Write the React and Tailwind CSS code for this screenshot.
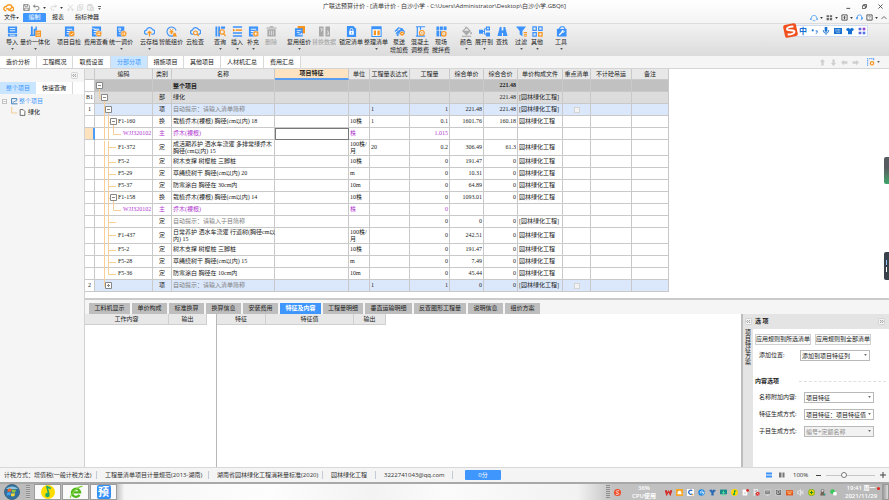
import React from "react";

const B = "#3b92fb";
const O = "#f8941d";
const G = "#a9a9a9";

function Svg({ children, className = "size-[11px]", box = 12 }) {
  return (
    <svg viewBox={`0 0 ${box} ${box}`} className={`${className} shrink-0`} fill="none" aria-hidden="true">
      {children}
    </svg>
  );
}

const Sheet = ({ c = B }) => (
  <>
    <path d="M1 .5h10v11H1z" fill={c} />
    <path d="M3 3.5h6M3 6h6M3 8.5h3" stroke="#fff" strokeWidth="1" />
  </>
);
const Badge = ({ d }) => (
  <>
    <circle cx="8.5" cy="8.5" r="3.3" fill={O} stroke="#eee" strokeWidth=".6" />
    <path d={d} stroke="#fff" strokeWidth=".9" />
  </>
);
const Cloud = () => (
  <path d="M4 9H3a2.3 2.3 0 0 1-.3-4.6A3.5 3.5 0 0 1 9.4 4 2.5 2.5 0 0 1 9 9H8" stroke={B} strokeWidth="1.3" />
);

const ICONS = {
  import: (
    <>
      <path d="M1 .5h10v7H1zM1 8.5h10v3H1z" fill={B} />
      <path d="M3 2.8h6M3 5.2h6M3 10h6" stroke="#fff" strokeWidth=".9" />
    </>
  ),
  quantity: (
    <>
      <path d="M1 .5h2v10H1zM4 3h2v7.5H4zM0 9.5h6v1.5H0zM6 .5h1.5V5H6z" fill={B} />
      <path d="M6 5h6v7H6z" fill={O} />
      <path d="M7 7h4M7 8.8h4M7 10.5h4" stroke="#fff" strokeWidth=".6" />
    </>
  ),
  check: (<><Sheet /><Badge d="M7 8.5l1.2 1.2L10.2 7.5" /></>),
  fee: (
    <>
      <Sheet />
      <path d="M1 2l10 5" stroke="#fff" strokeWidth=".7" />
      <Badge d="M7 7.6h3M7 9.3h3" />
    </>
  ),
  adjust: (
    <>
      <path d="M1 .5h8v11H1z" fill={B} />
      <path d="M3 2.5h2v2H3zM3 6h2M3 8.5h2" stroke="#fff" strokeWidth=".8" />
      <Badge d="M7.5 7v3M9.5 7v3" />
    </>
  ),
  cloudUp: (<><Cloud /><path d="M6 11.5V6M3.9 8L6 5.8 8.1 8" stroke={O} strokeWidth="1.4" /></>),
  smart: (
    <>
      <path d="M10.5 8.5A5 5 0 1 1 11 5M4 11l-1.5-1" stroke={B} strokeWidth="1.2" />
      <path d="M4 3l2 2.5L8 3M6 5.5V9M4 6h4M4 7.5h4" stroke={O} strokeWidth="1" />
      <path d="M8 8.5l2-1.5 2 4.5H7.5z" fill={O} />
    </>
  ),
  cloudFind: (<><Cloud /><circle cx="6" cy="7.5" r="2.1" stroke={O} strokeWidth="1.2" /><path d="M7.5 9l2 2" stroke={O} strokeWidth="1.3" /></>),
  query: (
    <>
      <path d="M.5 .5h2v11h-2zM3.5 .5h2v11h-2zM6.5 .5H11V3H6.5z" fill={B} />
      <circle cx="7.8" cy="6.5" r="2.4" stroke={O} strokeWidth="1.2" />
      <path d="M9.5 8.5l2 2.5" stroke={O} strokeWidth="1.3" />
    </>
  ),
  insert: (
    <>
      <path d="M1 1.2h10M1 10.8h10M1 7.7h10" stroke={B} strokeWidth="1.6" />
      <path d="M4 4.500h7" stroke={O} strokeWidth="1.6" />
      <path d="M1 2.800l2.500 1.700L1 6.200z" fill={O} />
    </>
  ),
  plus: (<><Sheet /><Badge d="M8.5 6.7v3.6M6.7 8.5h3.6" /></>),
  trash: (
    <>
      <path d="M1.5 3.5h9v8h-9zM.5 1.5h11v1.3H.5zM4 .3h4v1H4z" fill={G} />
      <path d="M4 5v5M6 5v5M8 5v5" stroke="#e8e8e8" strokeWidth=".8" />
    </>
  ),
  reuse: (
    <>
      <path d="M4 0h8v8H4z" fill={O} />
      <path d="M1 2.5h8.5v9H1z" fill={B} />
      <path d="M3 5h5M3 7h3M4 9h5l-1.5-1.5M9 9l-1.5 1.5" stroke="#fff" strokeWidth=".8" />
    </>
  ),
  replace: (
    <>
      <path d="M0 .5h5v11H0zM7 .5h5v11H7z" fill={G} />
      <path d="M1.5 3h2l-1 3M8.5 9h2l-1-4" stroke="#eee" strokeWidth=".9" />
    </>
  ),
  lock: (
    <>
      <path d="M1 0h7l3 3v9H1z" fill={B} />
      <path d="M3.5 5.5h5v4h-5z" fill="#fff" />
      <path d="M4.5 5.5V4.2a1.5 1.5 0 0 1 3 0v1.3" stroke="#fff" strokeWidth=".9" />
      <path d="M6 6.7v1.6" stroke={B} strokeWidth=".9" />
    </>
  ),
  arrange: (
    <>
      <path d="M1 1h10v10.5H1z" fill="#fff" stroke={B} strokeWidth="1.2" />
      <path d="M1 1h10v2.5H1z" fill={B} />
      <path d="M3 5h2.5v5H3zM7 5h2.5v5H7z" fill={O} />
    </>
  ),
  pump: (
    <>
      <path d="M1 6l4-4 4 1M5 2L3 5" stroke={B} strokeWidth="1.2" />
      <path d="M4 5.5l5-3 3 3.5v3H2V7.5z" fill={B} />
      <circle cx="4" cy="9.8" r="1.5" fill={B} stroke="#eee" strokeWidth=".5" />
      <circle cx="8.8" cy="8.3" r="2.6" fill={O} stroke="#eee" strokeWidth=".6" />
      <circle cx="8.8" cy="8.3" r=".8" fill="#fff" />
    </>
  ),
  concrete: (
    <>
      <path d="M1 .8h10M2.5 .8v10M1 11h10M6 1v3" stroke={B} strokeWidth="1.3" />
      <circle cx="7.5" cy="7.5" r="2.6" fill="#eee" stroke={O} strokeWidth="1.2" />
      <circle cx="7.5" cy="7.5" r=".8" fill={O} />
    </>
  ),
  site: (
    <>
      <path d="M.5 .5h3v11h-3zM4.3 .5h3.2v4H4.3zM8.3 .5h3.2v4H8.3zM4.3 5.3H6v6.2H4.3z" fill={B} />
      <path d="M.5 4.8h11" stroke="#eee" strokeWidth=".6" />
      <circle cx="8.5" cy="8.5" r="2.5" fill="#eee" stroke={O} strokeWidth="1.3" />
      <circle cx="8.5" cy="8.5" r=".7" fill={O} />
    </>
  ),
  color: (
    <>
      <path d="M2 5.5l4-4 4 4-4 4z" stroke={G} strokeWidth="1.2" />
      <path d="M2.5 5.5h7L6 9zM11 6.5l.7 2h-1.4zM4 .5l2 2" fill={G} stroke={G} strokeWidth=".7" />
      <path d="M1 11.2h10" stroke={G} strokeWidth="1.2" />
    </>
  ),
  expand: (
    <>
      <path d="M0 4h4.5v4.5H0zM7.5 .5H12V5H7.5zM7.5 7H12v4.5H7.5z" fill={B} />
      <path d="M4 6h2M7.5 3H6v6h1.5" stroke={B} />
      <path d="M9 2h1.5v1.5H9z" fill="#fff" />
    </>
  ),
  find: (
    <path d="M3 1h2v2.5L5.5 11H.5L2.5 3.5zM7 1h2l.5 2.5 2 7.5h-5L7 3.5zM5 5h2v2.5H5z" fill={B} />
  ),
  filter: (
    <>
      <path d="M0 .5h11L7 5.5v6L4 9V5.5z" fill={B} />
      <path d="M8.5 7H12M8.5 9H12M8.5 11H12" stroke={O} strokeWidth="1.1" />
    </>
  ),
  other: (
    <>
      <path d="M1 1h3.7v3.7H1zM7.3 1H11v3.7H7.3zM1 7.3h3.7V11H1z" stroke={B} strokeWidth="1.3" />
      <path d="M7.3 7.3H11V11H7.3z" stroke={O} strokeWidth="1.3" />
    </>
  ),
  tools: (
    <>
      <path d="M3 3.500L5.500 .8h3L10 3.500" stroke={B} strokeWidth="1.3" />
      <path d="M1 3.200h10.500v8.300H1z" fill={B} />
      <path d="M3.500 9.800l3.500-3.500" stroke="#fff" strokeWidth="1.3" />
      <circle cx="7.700" cy="5.800" r="1.500" fill="#fff" />
      <circle cx="8.300" cy="5.200" r=".7" fill={B} />
    </>
  ),
};

const RIBBON = [
  ["import", ["导入"], 1, "ml-1 w-4"],
  ["quantity", ["量价一体化"], 1, "w-[30px]"],
  ["check", ["项目自检"], 0, "ml-[7px] w-6"],
  ["fee", ["费用查看"], 0, "ml-[3px] w-6"],
  ["adjust", ["统一调价"], 1, "ml-px w-6"],
  ["cloudUp", ["云存档"], 1, "ml-[7px] w-[18px]"],
  ["smart", ["智能组价"], 0, "ml-px w-6"],
  ["cloudFind", ["云检查"], 0, "ml-[3px] w-[18px]"],
  ["query", ["查询"], 1, "ml-[10px] w-3"],
  ["insert", ["插入"], 1, "ml-[5px] w-3"],
  ["plus", ["补充"], 1, "ml-1 w-3"],
  ["trash", ["删除"], 0, "ml-[6px] w-3 text-[#a0a0a0]"],
  ["reuse", ["复用组价"], 1, "ml-[10px] w-6"],
  ["replace", ["替换数据"], 0, "ml-px w-6 text-[#a0a0a0]"],
  ["lock", ["锁定清单"], 0, "ml-[3px] w-6"],
  ["arrange", ["整理清单"], 1, "ml-px w-6"],
  ["pump", ["泵送", "增加费"], 0, "ml-[2px] w-[18px]"],
  ["concrete", ["混凝土", "调整费"], 0, "ml-[3px] w-[18px]"],
  ["site", ["现场", "搅拌费"], 0, "ml-[3px] w-[18px]"],
  ["color", ["颜色"], 1, "ml-[10px] w-3"],
  ["expand", ["展开到"], 1, "ml-[3px] w-[18px]"],
  ["find", ["查找"], 0, "ml-[3px] w-3"],
  ["filter", ["过滤"], 1, "ml-[7px] w-3"],
  ["other", ["其他"], 1, "ml-1 w-3"],
  ["tools", ["工具"], 1, "ml-3 w-3"],
];

const Caret = ({ className = "text-[#333]" }) => (
  <svg viewBox="0 0 4 3" className={`h-[2px] w-[3px] shrink-0 ${className}`} aria-hidden="true">
    <path d="M0 0h4L2 3z" fill="currentColor" />
  </svg>
);

function TitleBar() {
  return (
    <header className="grid h-3 grid-cols-[1fr_auto_1fr] items-center">
      <div className="flex items-center pt-[2px] pl-[3px]">
        <Svg className="size-[11px]">
          <path d="M3.5 9.5a2.3 2.3 0 1 1 .3-4.5A3.3 3.3 0 0 1 10 5.5a2 2 0 0 1-1 4C7 9.5 6 5.5 3.5 8M6 9.5L9.5 6" stroke="#f9981d" strokeWidth="1.5" />
        </Svg>
        <button aria-label="保存" className="ml-[9px]">
          <Svg className="size-[7px]"><path d="M1 1h8l2 2v8H1zM3 1v3h5V1M3 11V7h6v4" stroke="#555" /></Svg>
        </button>
        <button aria-label="撤销" className="ml-[3px] flex items-center gap-[3px]">
          <Svg className="size-[7px]"><path d="M3 1L1 4l3 2M1 4h6a3 3 0 0 1 0 6.5H5" stroke="#555" strokeWidth="1.2" /></Svg>
          <Caret />
        </button>
        <button aria-label="重做" className="ml-1 flex items-center gap-[3px]">
          <Svg className="size-[7px]"><path d="M9 1l2 3-3 2M11 4H5a3 3 0 0 0 0 6.5h2" stroke="#ccc" strokeWidth="1.2" /></Svg>
          <Caret />
        </button>
        <button aria-label="剪切" className="ml-1">
          <Svg className="size-[7px]"><path d="M2 1l7 8M10 1L3 9" stroke="#ccc" /><circle cx="2.5" cy="10" r="1.3" stroke="#ccc" /><circle cx="9.5" cy="10" r="1.3" stroke="#ccc" /></Svg>
        </button>
        <button aria-label="复制" className="ml-[3px]">
          <Svg className="size-[7px]"><path d="M1 3.5h6v8H1zM4 3.5v-3h6v8H7M3 6h3M3 8.5h3" stroke="#ccc" /></Svg>
        </button>
        <button aria-label="粘贴" className="ml-[3px]">
          <Svg className="size-[7px]"><path d="M1 1.5h8v9H1zM3 .5h4v2H3zM6 5h5v6.5H6z" fill="#f5f5f5" stroke="#ccc" /></Svg>
        </button>
        <button aria-label="更多" className="ml-1 flex flex-col items-center gap-px">
          <span className="h-px w-[3px] bg-[#666]" />
          <Caret className="text-[#666]" />
        </button>
      </div>
      <h1 className="whitespace-nowrap text-[#333]">
        广联达预算计价 - [清单计价 - 白沙小学 - C:\Users\Administrator\Desktop\白沙小学.GBQ6]
      </h1>
      <div className="flex items-center justify-end gap-[11px] pr-[6px]">
        <button aria-label="最小化"><Svg className="size-[5px]"><path d="M1 10.5h9" stroke="#333" strokeWidth="2" /></Svg></button>
        <button aria-label="还原"><Svg className="size-[5px]"><path d="M1 4h7v7H1zM4 4V1h7v7H8" stroke="#333" strokeWidth="1.8" /></Svg></button>
        <button aria-label="关闭"><Svg className="size-[5px]"><path d="M1 1l10 10M11 1L1 11" stroke="#333" strokeWidth="1.8" /></Svg></button>
      </div>
    </header>
  );
}

const HeadsetIcon = () => (
  <Svg className="size-[7px]">
    <path d="M2 8V5.5a4 4 0 0 1 8 0V8M8 11l2-2" stroke={B} strokeWidth="1.3" />
    <path d="M.5 5.5h2.5v3.5H.5zM9 5.5h2.5v3.5H9z" fill={B} />
  </Svg>
);

function MenuRow() {
  return (
    <nav className="flex h-[11px] items-center text-[#222]">
      <button className="ml-1 flex items-center">文件<Caret /></button>
      <button className="ml-1 h-[9px] w-[23px] rounded-t-[1px] bg-[#3f97fd] text-white">编制</button>
      <button className="ml-[6px]">报表</button>
      <button className="ml-[11px]">指标神器</button>
      <div className="ml-auto flex items-center pr-[2px]">
        <button aria-label="用户" className="flex items-center gap-[2px]">
          <Svg className="size-2"><path d="M2 9V6a4 4 0 0 1 8 0v3M.8 6v3M11.2 6v3M4 10h4" stroke="#58a9f8" strokeWidth="1.2" /></Svg>
          <Caret />
        </button>
        <button aria-label="应用" className="ml-[3px] flex items-center gap-[2px]">
          <Svg className="size-[7px]"><path d="M1 2h4v3.5H1zM6.5 2h4v3.5h-4zM1 7h4v3.5H1zM6.5 7h4v3.5h-4z" fill="#666" /></Svg>
          <Caret />
        </button>
        <button aria-label="升级" className="ml-[3px] flex items-center gap-[2px]">
          <Svg className="size-[7px]"><path d="M1.5 1.5h9v9h-9z" stroke="#555" strokeWidth="1.6" /><path d="M6 3l2.5 3H7v3H5V6H3.5z" fill="#555" /></Svg>
          <Caret />
        </button>
        <button aria-label="客服" className="ml-[3px]"><HeadsetIcon /></button>
        <button aria-label="帮助" className="ml-[3px] flex items-center gap-[2px]">
          <Svg className="size-[7px]"><path d="M1.5 1.5h9v9h-9z" stroke="#555" strokeWidth="1.6" /><path d="M4.5 4.5C4.5 2.8 7.5 3 7.5 4.7 7.5 6 6 5.8 6 7M6 8v1" stroke="#555" /></Svg>
          <Caret />
        </button>
        <button aria-label="收起" className="ml-[3px]"><Svg className="size-[6px]"><path d="M1 8l5-5 5 5" stroke="#444" strokeWidth="1.5" /></Svg></button>
      </div>
    </nav>
  );
}

function InputMethodBar() {
  const blue = "#1470d2";
  return (
    <div className="absolute top-px right-[21px] flex h-3 items-center gap-1 border border-[#cfdcf0] bg-white pr-px pl-3">
      <div className="absolute -top-[2px] -left-[3px] flex size-[13px] -rotate-12 items-center justify-center rounded-[2px] bg-[#f0501e]">
        <Svg className="size-[11px]"><path d="M10 2.5C7 1.5 2.5 2 2.5 4S10 5.5 10 8 5 10.5 2 9.5" stroke="#fff" strokeWidth="2" /></Svg>
      </div>
      <span className="w-2 text-[8px] leading-[8px] font-bold text-[#1470d2]">中</span>
      <Svg className="size-[7px]"><circle cx="3" cy="4" r="1.8" fill={blue} /><path d="M8 5h2.5v2.5L8.5 10" stroke={blue} strokeWidth="1.6" /></Svg>
      <Svg className="size-2"><path d="M4 0h4v7H4z" fill={blue} /><path d="M2 4.5V6a4 3 0 0 0 8 0V4.5M6 9v3" stroke={blue} strokeWidth="1.2" /></Svg>
      <Svg className="size-2"><path d="M0 1.5h12v9H0z" fill={blue} /><path d="M2 4h8M2 6h8M3.5 8.5h5" stroke="#fff" strokeWidth=".9" strokeDasharray="1.5 .5" /></Svg>
      <Svg className="size-2"><path d="M3.5 1C4.5 3 7.5 3 8.5 1L12 3l-1.5 3-1.5-.5V11H3V5.5L1.5 6 0 3z" fill={blue} /></Svg>
      <Svg className="size-2"><path d="M1 1h4v4H1zM1 7h4v4H1z" fill="#5a66dd" /><path d="M7 1h4v4H7z" fill="#9548c8" /><path d="M7 7h4v4H7z" fill="#4c78e8" /></Svg>
    </div>
  );
}

function Ribbon() {
  return (
    <div className="relative flex h-[33px] border-y border-[#dcdcdc] bg-linear-to-b from-[#f2f2f2] to-[#dcdcdc] pt-[2px]">
      {RIBBON.map(([icon, lines, caret, pos]) => (
        <button key={icon} className={`flex shrink-0 flex-col items-center whitespace-nowrap ${pos}`}>
          <Svg>{ICONS[icon]}</Svg>
          <span className="mt-[2px] flex flex-col gap-px">
            {lines.map((l) => <span key={l}>{l}</span>)}
          </span>
          {caret ? <Caret className="mt-[2px] text-[#555]" /> : null}
        </button>
      ))}
      <InputMethodBar />
    </div>
  );
}

const MAIN_TABS = [
  ["造价分析", "w-[37px]"], ["工程概况", "w-9"], ["取费设置", "w-[38px]"], ["分部分项", "w-[37px]"],
  ["措施项目", "w-9"], ["其他项目", "w-[37px]"], ["人材机汇总", "w-[43px]"], ["费用汇总", "w-[37px]"],
];

function MainTabs() {
  const arrows = [["上移", 0], ["下移", 180], ["左移", 270], ["右移", 90]];
  return (
    <div className="flex h-[13px] border-b border-[#d5d5d5] bg-[#f5f5f5]">
      {MAIN_TABS.map(([t, w]) => (
        <button
          key={t}
          className={`${w} shrink-0 border-r border-[#d9d9d9] ${t === "分部分项" ? "bg-[#c9e5ff] text-[#3f97fd]" : "bg-white text-[#222]"}`}
        >
          {t}
        </button>
      ))}
      <div className="ml-auto flex items-center gap-1 pr-[9px]">
        {arrows.map(([name, a]) => (
          <button key={a} aria-label={name}>
            <Svg className="size-[7px]"><path d="M6 0l4.5 5H8v6H4V5H1.5z" fill="#cfcfcf" transform={`rotate(${a} 6 6)`} /></Svg>
          </button>
        ))}
        <button aria-label="列设置" className="ml-1 flex items-center gap-[2px]">
          <Svg className="size-2"><path d="M1 0v12M3 1h8M10 1v3" stroke={B} strokeWidth="1.3" strokeDasharray="2 .6" /><circle cx="7.5" cy="8" r="2.5" stroke={O} strokeWidth="1.8" /></Svg>
          <Caret className="text-[#666]" />
        </button>
      </div>
    </div>
  );
}

const Chevrons = ({ right }) => (
  <button aria-label={right ? "展开" : "折叠"} className="size-[7px] shrink-0">
    <svg viewBox="0 0 14 14" className="size-[7px]" fill="none" aria-hidden="true">
      <rect x="1" y="1" width="12" height="12" rx="2" fill="#f6f6f6" stroke="#c8c8c8" strokeWidth="1.5" />
      <path d={right ? "M4 4l2.5 3L4 10M8 4l2.5 3L8 10" : "M6 4L3.5 7 6 10M10 4L7.5 7l2.5 3"} stroke="#666" strokeWidth="1.2" />
    </svg>
  </button>
);

function Sidebar() {
  return (
    <aside className="w-[85px] shrink-0 border-r border-[#d2d2d2] bg-[#f5f5f5]">
      <div className="flex h-[13px] items-center justify-end pr-[6px]"><Chevrons /></div>
      <div className="flex h-3 bg-white">
        <button className="w-9 bg-[#c9e5ff] text-[#3f97fd]">整个项目</button>
        <button className="w-[37px] border-r border-[#d9d9d9] text-[#111]">快速查询</button>
      </div>
      <ul className="pt-[2px] pl-[2px]">
        <li>
          <div className="flex h-[11px] items-center">
            <Svg className="size-[5px]"><path d="M1 1h10v10H1zM3 6h6" fill="#fff" stroke="#999" strokeWidth="1.5" /></Svg>
            <Svg className="ml-1 size-[7px]"><path d="M1 1v9h10M1 1h9v3M3 7c3 1 3-3 7-2" stroke="#337ab7" strokeWidth="1.6" /></Svg>
            <a href="#project" className="ml-px text-[#3f97fd]">整个项目</a>
          </div>
          <ul>
            <li className="flex h-[11px] items-center pl-[9px]">
              <Svg className="size-2 overflow-visible"><path d="M1 -3v9h8" stroke="#f3cd94" strokeWidth="1.5" /></Svg>
              <Svg className="size-[7px]"><path d="M2 1h5l3 3v7H2z" fill="#fff" stroke="#444" strokeWidth="1.3" /></Svg>
              <a href="#green" className="ml-[2px] text-[#111]">绿化</a>
            </li>
          </ul>
        </li>
      </ul>
    </aside>
  );
}

const COLS = [
  ["", "w-[10px]"], ["编码", "w-[58px]"], ["类别", "w-[19px]"], ["名称", "w-[103px]"], ["项目特征", "w-[74px]"],
  ["单位", "w-[21px]"], ["工程量表达式", "w-[40px]"], ["工程量", "w-[40px]"], ["综合单价", "w-[34px]"],
  ["综合合价", "w-[34px]"], ["单价构成文件", "w-[45px]"], ["重点清单", "w-[28px]"], ["不计砼吊运", "w-[41px]"], ["备注", "w-[37px]"],
];

const LEAF = "M9.5 0V16M13.5 0V16M13.5 6.5H21";
const P = "园林绿化工程";
const Q = "[园林绿化工程]";
// no, kind, indent, box sign, guide path, code, category, name, unit, expression, quantity, price, total, file
const ROWS = [
  ["", "root", 1, "-", "M4.5 6V12", "", "", "整个项目", "", "", "", "", "221.48", ""],
  ["B1", "part", 6, "-", "M4.5 0V6.5H8M9.5 6V12", "", "部", "绿化", "", "", "", "", "221.48", Q],
  ["1", "item", 10, "-", "M9.5 0V12M9.5 6.5H12M13.5 6V12", "", "项", "自动提示：请输入清单简称", "", "1", "1", "221.48", "221.48", Q],
  ["", "", 15, "-", "M9.5 0V12M13.5 0V12M13.5 6.5H18M18.5 6V12", "F1-160", "换", "栽植乔木(裸根) 胸径(cm以内) 18", "10株", "1", "0.1", "1601.76", "160.18", P],
  ["", "main", 28, "", "M9.5 0V12M13.5 0V12M18.5 0V6.5H26", "WJJ320102", "主", "乔木(裸根)", "株", "", "1.015", "", "", ""],
  ["", "", 23, "", LEAF, "F1-372", "定", "成活期养护 洒水车浇灌 多排常绿乔木\n胸径(cm以内) 15", "100株/\n月", "20", "0.2", "306.49", "61.3", P],
  ["", "", 23, "", LEAF, "F5-2", "定", "树木支撑 树棍桩 三脚桩", "10株", "", "0", "191.47", "0", P],
  ["", "", 23, "", LEAF, "F5-29", "定", "草绳绕树干 胸径(cm以内) 20", "m", "", "0", "10.31", "0", P],
  ["", "", 23, "", LEAF, "F5-37", "定", "防寒涂白 胸径在 30cm内", "10m", "", "0", "64.89", "0", P],
  ["", "", 15, "-", "M9.5 0V12M13.5 0V12M13.5 6.5H18M18.5 6V12", "F1-158", "换", "栽植乔木(裸根) 胸径(cm以内) 14", "10株", "", "0", "1093.01", "0", P],
  ["", "main", 28, "", "M9.5 0V12M13.5 0V12M18.5 0V6.5H26", "WJJ320102", "主", "乔木(裸根)", "株", "", "0", "", "", ""],
  ["", "hint", 23, "", LEAF, "", "定", "自动提示：请输入子目简称", "", "", "0", "0", "0", Q],
  ["", "", 23, "", LEAF, "F1-437", "定", "日常养护 洒水车浇灌 行道树(胸径cm以\n内) 15", "100株/\n月", "", "0", "242.51", "0", P],
  ["", "", 23, "", LEAF, "F5-2", "定", "树木支撑 树棍桩 三脚桩", "10株", "", "0", "191.47", "0", P],
  ["", "", 23, "", LEAF, "F5-28", "定", "草绳绕树干 胸径(cm以内) 15", "m", "", "0", "7.49", "0", P],
  ["", "", 23, "", "M9.5 0V12M13.5 0V6.5H21", "F5-36", "定", "防寒涂白 胸径在 10cm内", "10m", "", "0", "45.44", "0", P],
  ["2", "item", 10, "+", "M9.5 0V6.5H12", "", "项", "自动提示：请输入清单简称", "", "1", "1", "0", "0", Q],
];

const KIND = {
  root: "bg-[#c1c1c1] font-bold",
  part: "bg-[#dcdcdc]",
  item: "bg-[#dbe8fc]",
  main: "text-[#b23ad0]",
  hint: "",
  "": "",
};

function Row({ row, active }) {
  const [no, kind, indent, sign, guide, code, cat, name, unit, expr, qty, price, total, file] = row;
  const tall = name.includes("\n");
  const h = tall ? "h-4" : "h-3";
  const td = `${h} border-r border-b border-[#c9c9c9] px-px`;
  const hint = kind === "item" || kind === "hint" ? "text-[#808080]" : "";
  return (
    <tr className={KIND[kind]}>
      <td className={`${h} border-b border-[#c9c9c9] text-center text-[#222] ${active ? "border-r-2 border-r-[#4f9cf5] bg-[#fde2bd]" : "border-r bg-white"}`}>{no}</td>
      <td className={`${h} border-r border-b border-[#c9c9c9]`}>
        <div className={`flex items-center ${tall ? "h-[15px]" : "h-[11px]"}`}>
          <svg width={indent} className="h-full shrink-0 overflow-visible" aria-hidden="true">
            <path d={guide} transform={tall ? "translate(0 1)" : undefined} stroke="#f7cf97" fill="none" />
          </svg>
          {sign ? (
            <button aria-label={sign === "-" ? "折叠" : "展开"} className="mr-px size-[7px] shrink-0">
              <svg viewBox="0 0 7 7" className="size-[7px]">
                <path d={sign === "-" ? "M.5 .5h6v6h-6zM2 3.5h3" : "M.5 .5h6v6h-6zM2 3.5h3M3.5 2v3"} fill="#fff" stroke="#888" />
              </svg>
            </button>
          ) : null}
          <span>{code}</span>
        </div>
      </td>
      <td className={`${td} text-center`}>{cat}</td>
      <td className={`${td} whitespace-pre ${kind === "root" ? "font-['Noto_Sans_CJK_SC',sans-serif]" : ""} ${hint}`}>{name}</td>
      <td className={active ? "h-3 border border-[#777]" : td} />
      <td className={`${td} whitespace-pre`}>{unit}</td>
      <td className={td}>{expr}</td>
      <td className={`${td} text-right`}>{qty}</td>
      <td className={`${td} text-right`}>{price}</td>
      <td className={`${td} text-right`}>{total}</td>
      <td className={`${td} whitespace-nowrap`}>{file}</td>
      <td className={td}>
        {kind === "item" ? (
          <input type="checkbox" disabled aria-label="重点清单" className="mx-auto block size-[6px] appearance-none border border-[#d4d4d4] bg-[#f2f2f2]" />
        ) : null}
      </td>
      <td className={td} />
      <td className={td} />
    </tr>
  );
}

function Grid() {
  return (
    <div className="h-[229px] shrink-0 overflow-hidden bg-white">
      <table className="w-[584px] table-fixed border-separate border-spacing-0 font-['Liberation_Serif','Noto_Sans_CJK_SC',serif] text-[#222]">
        <colgroup>{COLS.map(([t, w]) => <col key={t} className={w} />)}</colgroup>
        <thead className="font-['Open_Sans','Noto_Sans_CJK_SC',sans-serif]">
          <tr>
            {COLS.map(([t]) => (
              <th
                key={t}
                className={`h-[11px] border-r border-[#c9c9c9] whitespace-nowrap ${t === "项目特征" ? "border-b-2 border-b-[#5a9df0] bg-[#fde3c1] font-bold" : "border-b bg-[#e8e8e8] font-normal"}`}
              >
                {t}
              </th>
            ))}
          </tr>
        </thead>
        <tbody>{ROWS.map((r, i) => <Row key={i} row={r} active={i === 4} />)}</tbody>
      </table>
    </div>
  );
}

const SUB_TABS = [
  ["工料机显示", "w-[41px]"], ["单价构成", "w-[35px]"], ["标准换算", "w-[35px]"], ["换算信息", "w-[35px]"],
  ["安装费用", "w-[35px]"], ["特征及内容", "w-[41px]"], ["工程量明细", "w-[40px]"], ["垂直运输明细", "w-[47px]"],
  ["反查图形工程量", "w-[52px]"], ["说明信息", "w-[35px]"], ["组价方案", "w-[35px]"],
];

function HeadTable({ cols }) {
  return (
    <table className="table-fixed border-separate border-spacing-0">
      <thead>
        <tr>
          {cols.map(([t, w]) => (
            <th key={t} className={`${w} h-[11px] border-r border-b border-[#cfcfcf] bg-[#e8e8e8] font-normal`}>{t}</th>
          ))}
        </tr>
      </thead>
    </table>
  );
}

function Choice({ id, label, value, disabled, gap }) {
  return (
    <div className="flex h-[17px] items-center pl-1">
      <label htmlFor={id} className={`${gap} shrink-0`}>{label}</label>
      <div className="relative">
        <select
          id={id}
          disabled={disabled}
          defaultValue={value}
          className="block h-[11px] w-[70px] appearance-none border border-[#b9b9b9] bg-white pl-px leading-[8px] disabled:bg-[#f2f2f2] disabled:text-[#8a8a8a] disabled:opacity-100"
        >
          <option>{value}</option>
        </select>
        <div className="pointer-events-none absolute top-1 right-[3px] flex"><Caret className="text-[#666]" /></div>
      </div>
    </div>
  );
}

function Options() {
  return (
    <aside className="flex w-[148px] shrink-0 border-l-2 border-[#bdbdbd] bg-white">
      <div className="flex w-[10px] shrink-0 flex-col items-center bg-[#e4e4e4] pt-1">
        <Chevrons />
        <button className="mt-1 w-[6px] leading-[6px] break-all text-[#222]">项目特征方案</button>
      </div>
      <div className="min-w-0 flex-1">
        <div className="flex h-[15px] items-center justify-between bg-[#e4e4e4] pr-1 pl-[2px]">
          <h2 className="font-bold text-[#222]">选 项</h2>
          <Chevrons right />
        </div>
        <div className="pt-[5px] pl-[2px]">
          <div className="flex gap-[4px]">
            <button className="h-[11px] w-14 border border-[#d0d0d0] bg-[#fbfbfb] text-center whitespace-nowrap">应用规则到所选清单</button>
            <button className="h-[11px] w-14 border border-[#d0d0d0] bg-[#fbfbfb] text-center whitespace-nowrap">应用规则到全部清单</button>
          </div>
          <div className="pt-[2px]">
            <Choice id="place" label="添加位置:" value="添加到项目特征列" gap="w-[41px]" />
          </div>
          <div className="mt-[14px] mb-1 flex items-center">
            <h3 className="w-11 font-bold text-[#222]">内容选项</h3>
            <div className="mr-[3px] flex-1 border-t border-dashed border-[#e0e0e0]" />
          </div>
          <Choice id="extra" label="名称附加内容:" value="项目特征" gap="w-[45px]" />
          <Choice id="feature" label="特征生成方式:" value="项目特征：项目特征值" gap="w-[45px]" />
          <Choice id="child" label="子目生成方式:" value="编号+定额名称" gap="w-[45px]" disabled />
        </div>
      </div>
    </aside>
  );
}

function Detail() {
  return (
    <section className="flex min-h-0 flex-1 flex-col border-t-2 border-[#cbcbcb]">
      <div className="flex h-[14px] shrink-0 items-end gap-[2px] bg-[#f5f5f5] pl-1">
        {SUB_TABS.map(([t, w]) => (
          <button key={t} className={`${w} h-[11px] shrink-0 whitespace-nowrap ${t === "特征及内容" ? "bg-[#3f97fd] font-bold text-white" : "bg-[#bebebe] text-[#222]"}`}>
            {t}
          </button>
        ))}
      </div>
      <div className="flex min-h-0 flex-1 bg-white">
        <div className="w-[132px] shrink-0 border-r border-[#b8b8b8]">
          <HeadTable cols={[["工作内容", "w-[84px]"], ["输出", "w-[38px]"]]} />
        </div>
        <div className="min-w-0 flex-1">
          <HeadTable cols={[["特征", "w-[49px]"], ["特征值", "w-[88px]"], ["输出", "w-8"]]} />
        </div>
        <Options />
      </div>
    </section>
  );
}

function StatusBar() {
  const items = [
    ["计税方式：增值税(一般计税方法)", "w-[101px]"], ["工程量清单项目计量规范(2013-湖南)", "w-[112px]"],
    ["湖南省园林绿化工程消耗量标准(2020)", "w-[114px]"], ["园林绿化工程", "w-[53px]"], ["3222741043@qq.com", "w-[77px]"],
  ];
  return (
    <footer className="flex h-[15px] shrink-0 items-center border-t border-[#d8d8d8] bg-[#f4f4f4] pl-1 text-[#333]">
      {items.map(([t, w]) => (
        <div key={t} className={`${w} flex shrink-0 items-center justify-between whitespace-nowrap`}>
          <span>{t}</span>
          <span className="mr-2 h-2 w-px bg-[#c2cad6]" />
        </div>
      ))}
      <button className="ml-1 h-[10px] w-9 rounded-[1px] bg-[#3f97fd] text-white">0分</button>
      <div className="ml-auto flex items-center pr-[3px]">
        <button aria-label="行视图"><Svg className="size-[6px]"><path d="M0 1h12v4H0zM0 7h12v4H0z" fill={B} /></Svg></button>
        <button aria-label="列视图" className="ml-[7px]"><Svg className="size-[6px]"><path d="M0 1h5v10H0zM7 1h4v10H7z" fill="#777" /></Svg></button>
        <span className="ml-2 w-[17px]">100%</span>
        <button aria-label="缩小" className="ml-[6px] h-px w-[5px] bg-[#444]" />
        <input
          type="range"
          aria-label="缩放"
          defaultValue={35}
          className="mx-[5px] h-[7px] w-[49px] appearance-none bg-[linear-gradient(#c6c6c6,#c6c6c6)] bg-[length:100%_1px] bg-center bg-no-repeat [&::-webkit-slider-thumb]:size-[6px] [&::-webkit-slider-thumb]:appearance-none [&::-webkit-slider-thumb]:rounded-full [&::-webkit-slider-thumb]:border [&::-webkit-slider-thumb]:border-[#777] [&::-webkit-slider-thumb]:bg-white"
        />
        <button aria-label="放大"><Svg className="size-[6px]"><path d="M6 0v12M0 6h12" stroke="#444" strokeWidth="2" /></Svg></button>
      </div>
    </footer>
  );
}

const TRAY = [
  <path d="M0 2l3 8 3-6 3 6 3-8M2 2l2 5M10 2L8 7" stroke="#d3312b" strokeWidth="2" />,
  <><path d="M0 0h12v12H0z" fill="#f7a828" /><path d="M3 9a2 2 0 0 1 0-3 3 3 0 0 1 6 0 2 2 0 0 1 0 3z" fill="#fff" /></>,
  <><path d="M0 0h12v12H0z" fill="#fff" /><path d="M9 3a3.5 3.5 0 1 0 0 5" stroke="#1f66c8" strokeWidth="2" /><path d="M8 9h3v2H8z" fill={O} /></>,
  <><circle cx="6" cy="6" r="5.5" fill="#1e8be6" /><path d="M9 4C5 2 3 5 5 8M6 6h4L8 10" stroke="#fff" strokeWidth="1.3" /></>,
  <><path d="M1 2l4 4v5M11 2L7 6v5M3 1l3 3 3-3" stroke="#2b6bb5" strokeWidth="2" /></>,
  <><path d="M0 1h12v8H0z" fill="#178a86" /><path d="M6 3v5M3.5 5.5L6 8l2.5-2.5M3 11h6" stroke="#5ff0a0" strokeWidth="1.3" /></>,
  <><circle cx="6" cy="6" r="5.8" fill="#ffd800" /><path d="M6 9V3l3 1" stroke="#16a34a" strokeWidth="1.8" /><circle cx="5" cy="9" r="1.8" fill="#16a34a" /></>,
  <><path d="M1 1h8v10H1z" fill="#fff" /><circle cx="9.5" cy="2.5" r="2.3" fill="#e02020" /><path d="M3 7h4" stroke="#999" /></>,
  <><path d="M2 0v12M2 1h6v5H2" stroke="#fff" strokeWidth="1.3" /><circle cx="8" cy="8" r="3.5" fill="#e03535" /><path d="M6.5 6.5l3 3" stroke="#fff" /></>,
  <><path d="M1 2h10v7H1z" fill="#777" stroke="#eee" /><path d="M3 5h6M4 11h4" stroke="#eee" /></>,
  <><path d="M1 1h10v10H1z" fill="#666" stroke="#eee" /><circle cx="6" cy="5" r="2.5" stroke="#eee" /><path d="M2 10l3-3" stroke="#eee" /></>,
  <><path d="M0 2h12v9H0z" fill="#e2541b" /><path d="M1 5h10M3 8h6" stroke="#ffd28a" strokeWidth="1.5" /></>,
  <><path d="M1 4h2l3-3v10L3 8H1zM8 4v4M10 2.5v7" stroke="#f5f5f5" strokeWidth="1.2" /></>,
  <><circle cx="6" cy="6" r="5.5" fill="#f5d400" stroke="#3a9e2c" /><path d="M6 3v6M3 6h6" stroke="#248a1e" strokeWidth="1.8" /></>,
  <><path d="M2 11l2-8h4l2 8z" fill="#7a6552" /><circle cx="6" cy="3" r="2.5" fill="#d9d9d9" stroke="#555" /><path d="M8 8h3v3H8z" fill="#2a9d8f" /></>,
  <><circle cx="4.5" cy="4.5" r="4.2" fill="#3cc95a" /><circle cx="8.5" cy="8" r="3.3" fill="#fff" /></>,
];

function Taskbar() {
  return (
    <div className="flex h-[18px] shrink-0 items-center border-t-2 border-[#a8a8a8] bg-[linear-gradient(90deg,#bcbcbc_0,#bcbcbc_13%,#f6f6f6_14%,#fdfdfd_30%,#f3f3f3_42%,#fbfbfb_50%,#f2f2f2_65%,#c2c2c2_69%,#b9b9b9_100%)]">
      <button aria-label="开始" className="ml-1">
        <svg viewBox="0 0 16 16" className="size-4">
          <circle cx="8" cy="8" r="7.5" fill="#2f6f9f" stroke="#466a80" />
          <path d="M2 5a7 5 0 0 1 12 0z" fill="#8fc4de" />
          <path d="M4 5c1.5-.8 2.5-.8 3.7 0L7 8c-1-.8-2.2-.8-3.6 0z" fill="#f0622a" />
          <path d="M8.3 5.2c1.2.8 2.3.8 3.7.2L11.3 8.3c-1.3.7-2.5.5-3.6 0z" fill="#8cc63f" />
          <path d="M3.2 8.7c1.4-.8 2.5-.7 3.6 0L6 11.6c-1-.7-2-.7-3.4 0z" fill="#42a5f5" />
          <path d="M7.5 9c1.2.7 2.3.7 3.6 0l-.7 3c-1.3.7-2.5.5-3.6-.2z" fill="#fdd835" />
        </svg>
      </button>
      <div className="ml-[6px] h-[14px] w-1 bg-[repeating-linear-gradient(#8e8e8e_0_1px,#c8c8c8_1px_2px)]" />
      <div className="ml-1 flex gap-px">
        <button aria-label="音乐" className="flex h-4 w-[27px] items-center justify-center border border-[#9c9c9c] bg-[#fafafa]">
          <Svg className="size-[14px]"><circle cx="6" cy="6" r="6" fill="#ffdc00" /><path d="M4.5 1l4 2M5 1l1.7 7" stroke="#1faa6c" strokeWidth="1.4" /><circle cx="5.5" cy="8.5" r="1.9" fill="#1faa6c" /></Svg>
        </button>
        <button aria-label="浏览器" className="flex h-4 w-[27px] items-center justify-center border border-[#9c9c9c] bg-[#fafafa]">
          <Svg className="size-[14px]"><path d="M2.5 6.3h7A3.5 3.5 0 1 0 9 8.5" stroke="#52b81c" strokeWidth="2" /><path d="M1 11C2 7 7 1.5 11.5 1" stroke="#7ed23e" /></Svg>
        </button>
        <button className="flex h-4 w-[27px] items-center justify-center border border-[#9c9c9c] bg-[#fafafa]">
          <span className="size-[14px] rounded-[2px] bg-[#3590f5] text-center text-[11px] leading-[14px] font-bold text-white">预</span>
        </button>
      </div>
      <div className="ml-auto flex items-center text-white">
        <div className="h-[14px] w-1 bg-[repeating-linear-gradient(#8e8e8e_0_1px,#c8c8c8_1px_2px)]" />
        <div className="ml-1 flex size-[7px] items-center justify-center rounded-full bg-[#ee4a24]">
          <Svg className="size-[5px]"><path d="M10 2C6 1 2 2 3 4.5S9 6 9 8.5 5 11 2 10" stroke="#fff" strokeWidth="2" /></Svg>
        </div>
        <div className="ml-[10px] w-[26px] text-center leading-[8px] font-semibold whitespace-nowrap">36%<br />CPU使用</div>
        <div className="ml-2 flex gap-1">
          {TRAY.map((icon, i) => <Svg key={i} className="size-[7px]">{icon}</Svg>)}
        </div>
        <div className="ml-2 w-8 text-center leading-[8px] font-semibold whitespace-nowrap">19:41 周一<br />2021/11/29</div>
        <span className="mb-2 size-[3px] rounded-full bg-[#e3241b]" />
        <div className="ml-[2px] h-4 w-[7px] border border-[#999] bg-linear-to-r from-[#999] to-[#ddd]" />
      </div>
    </div>
  );
}

export default function App() {
  return (
    <div className="relative flex min-h-screen flex-col overflow-hidden bg-white font-['Open_Sans','Noto_Sans_CJK_SC',sans-serif] text-[6px] leading-[7px] text-[#222]">
      <div className="shrink-0 bg-linear-to-b from-white to-[#f4f4f4]">
        <TitleBar />
        <MenuRow />
      </div>
      <Ribbon />
      <MainTabs />
      <main className="flex min-h-0 flex-1">
        <Sidebar />
        <div className="flex min-w-0 flex-1 flex-col">
          <Grid />
          <Detail />
        </div>
      </main>
      <StatusBar />
      <Taskbar />
      <div className="absolute top-[157px] right-0 h-[27px] w-[5px] rounded-l-[2px] bg-linear-to-b from-[#555b60] from-40% to-[#3aa66a]" />
      <div className="absolute top-[252px] right-0 flex h-7 w-[5px] flex-col items-center justify-center gap-[2px] rounded-l-[2px] bg-[#39424c]">
        <span className="h-[5px] w-px bg-[#8ec5ff]" />
        <span className="h-[5px] w-px bg-white" />
      </div>
    </div>
  );
}
